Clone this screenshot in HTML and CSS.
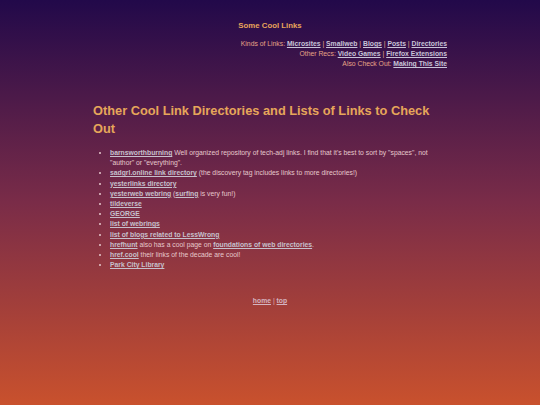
FILE: index.html
```html
<!DOCTYPE html>
<html>
<head>
<meta charset="utf-8">
<link rel="stylesheet" href="styles.css">
</head>
<body>
<div class="page">
  <header class="header">
    <div class="site-title">Some Cool Links</div>
    <nav class="nav">
      <div>Kinds of Links: <a href="#">Microsites</a> | <a href="#">Smallweb</a> | <a href="#">Blogs</a> | <a href="#">Posts</a> | <a href="#">Directories</a></div>
      <div>Other Recs: <a href="#">Video Games</a> | <a href="#">Firefox Extensions</a></div>
      <div>Also Check Out: <a href="#">Making This Site</a></div>
    </nav>
  </header>
  <main class="main">
    <h1 class="heading">Other Cool Link Directories and Lists of Links to Check Out</h1>
    <ul class="links">
      <li><a href="#">barnsworthburning</a> Well organized repository of tech-adj links. I find that it's best to sort by "spaces", not "author" or "everything".</li>
      <li><a href="#">sadgrl.online link directory</a> (the discovery tag includes links to more directories!)</li>
      <li><a href="#">yesterlinks directory</a></li>
      <li><a href="#">yesterweb webring</a> (<a href="#">surfing</a> is very fun!)</li>
      <li><a href="#">tildeverse</a></li>
      <li><a href="#">GEORGE</a></li>
      <li><a href="#">list of webrings</a></li>
      <li><a href="#">list of blogs related to LessWrong</a></li>
      <li><a href="#">hrefhunt</a> also has a cool page on <a href="#">foundations of web directories</a>.</li>
      <li><a href="#">href.cool</a> their links of the decade are cool!</li>
      <li><a href="#">Park City Library</a></li>
    </ul>
  </main>
  <footer class="footer"><a href="#">home</a> | <a href="#">top</a></footer>
</div>
</body>
</html>
```
FILE: styles.css
```css
html, body {
  margin: 0;
  padding: 0;
}
body {
  min-height: 405px;
  background: linear-gradient(to bottom, #22094a 0%, #7a2c48 50%, #c9512d 100%);
  font-family: "Liberation Sans", Arial, sans-serif;
  color: #e6c8cc;
}
.page {
  width: 354px;
  margin: 0 auto;
  padding-top: 21px;
}
.header {
  display: flex;
  flex-direction: column;
}
.site-title {
  text-align: center;
  font-weight: bold;
  font-size: 7.8px;
  line-height: 10px;
  color: #e8a55a;
}
.nav {
  margin-top: 8px;
  text-align: right;
  font-size: 6.8px;
  line-height: 10px;
  color: #e6a487;
}
a {
  color: #c8c4d8;
  font-weight: bold;
}
.main {
  margin-top: 33px;
}
.heading {
  margin: 0;
  font-size: 12.8px;
  line-height: 18px;
  color: #e6a65a;
}
.links {
  margin: 10px 0 0 0;
  padding-left: 17px;
  font-size: 6.8px;
  line-height: 10.2px;
}
.links a {
  color: #c6c0cc;
}
.footer {
  margin-top: 26px;
  text-align: center;
  font-size: 6.8px;
  line-height: 10px;
  color: #e0b0b0;
}
.footer a {
  color: #d4b4c0;
}
```
